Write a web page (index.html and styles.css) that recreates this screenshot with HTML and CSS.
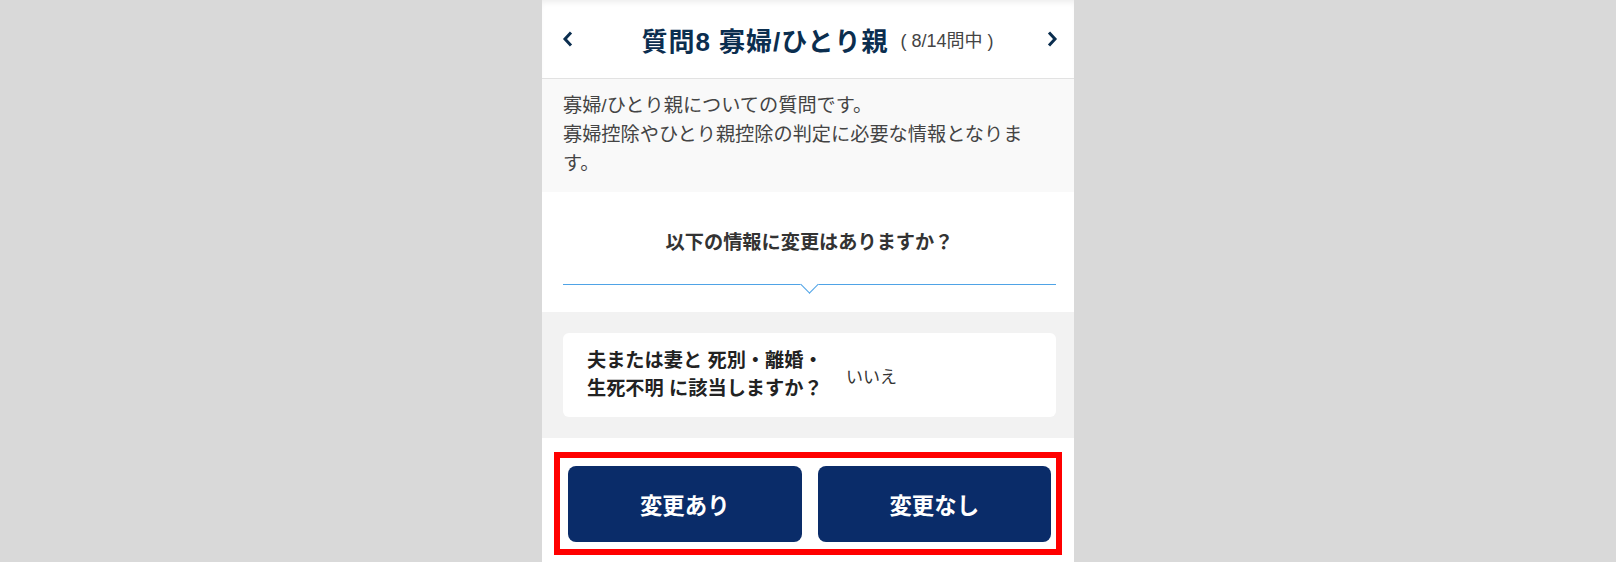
FILE: index.html
```html
<!DOCTYPE html>
<html lang="ja">
<head>
    <meta charset="UTF-8">
    <meta name="viewport" content="width=device-width, initial-scale=1.0">
    <title>質問8 寡婦/ひとり親</title>
    <link rel="stylesheet" href="styles.css">
</head>
<body>
    <div class="screen">
        <header class="nav">
            <button class="nav-arrow" aria-label="前の質問">
                <svg width="12" height="18" viewBox="0 0 12 18"><polyline points="9,2.5 3,9 9,15.5" fill="none" stroke="#0b2e4f" stroke-width="3"/></svg>
            </button>
            <h1 class="nav-title">質問8 寡婦/ひとり親<span class="nav-count">( 8/14問中 )</span></h1>
            <button class="nav-arrow" aria-label="次の質問">
                <svg width="12" height="18" viewBox="0 0 12 18"><polyline points="3,2.5 9,9 3,15.5" fill="none" stroke="#0b2e4f" stroke-width="3"/></svg>
            </button>
        </header>

        <p class="intro">寡婦/ひとり親についての質問です。<br>寡婦控除やひとり親控除の判定に必要な情報となります。</p>

        <section class="prompt">
            <p class="prompt-text">以下の情報に変更はありますか？</p>
            <div class="prompt-divider"></div>
        </section>

        <section class="answers">
            <div class="answer-card">
                <div class="answer-label">夫または妻と 死別・離婚・生死不明 に該当しますか？</div>
                <div class="answer-value">いいえ</div>
            </div>
        </section>

        <section class="actions">
            <div class="actions-box">
                <button class="action-btn">変更あり</button>
                <button class="action-btn">変更なし</button>
            </div>
        </section>
    </div>
</body>
</html>
```

FILE: styles.css
```css
body {
    margin: 0;
    font-family: "Liberation Sans", "Noto Sans CJK JP", sans-serif;
    background-color: #d9d9d9;
    color: #333;
}

.screen {
    width: 532px;
    min-height: 100vh;
    margin: 0 auto;
    background-color: #fff;
}

/* header */
.nav {
    height: 78px;
    display: flex;
    align-items: center;
    justify-content: space-between;
    padding: 0 15px 0 19px;
    border-bottom: 1px solid #e2e2e2;
    box-shadow: inset 0 5px 6px -3px rgba(0, 0, 0, 0.08);
}

.nav-arrow {
    width: 14px;
    height: 20px;
    padding: 0;
    border: none;
    background: none;
    display: flex;
    align-items: center;
    justify-content: center;
    cursor: pointer;
}

.nav-title {
    margin: 0 0 0 15px;
    font-size: 26px;
    font-weight: bold;
    letter-spacing: 1px;
    color: #0b2e4f;
    display: flex;
    align-items: center;
}

.nav-count {
    margin-left: 12px;
    font-size: 18px;
    font-weight: normal;
    letter-spacing: 0;
    color: #444;
}

/* intro */
.intro {
    margin: 0;
    padding: 12px 18px 14px 21px;
    background-color: #f9f9f9;
    font-size: 19.2px;
    line-height: 29px;
    color: #444;
}

/* question */
.prompt {
    padding: 36px 18px 27px 21px;
}

.prompt-text {
    margin: 0;
    text-align: center;
    font-size: 19.2px;
    line-height: 29px;
    font-weight: bold;
    color: #333;
}

.prompt-divider {
    position: relative;
    margin-top: 27px;
    height: 0;
    border-top: 1px solid #4fa3e6;
}

.prompt-divider::after {
    content: "";
    position: absolute;
    left: 50%;
    top: -7px;
    width: 12px;
    height: 12px;
    margin-left: -7px;
    background-color: #fff;
    border-right: 1px solid #4fa3e6;
    border-bottom: 1px solid #4fa3e6;
    transform: rotate(45deg);
}

/* current answers */
.answers {
    background-color: #f2f2f2;
    padding: 21px 18px 21px 21px;
}

.answer-card {
    display: flex;
    align-items: center;
    height: 84px;
    box-sizing: border-box;
    padding: 0 24px;
    background-color: #fff;
    border-radius: 6px;
}

.answer-label {
    width: 245px;
    font-size: 19.2px;
    line-height: 28px;
    font-weight: bold;
    color: #222;
}

.answer-value {
    margin-left: 14px;
    font-size: 17px;
    color: #333;
}

/* buttons */
.actions {
    padding: 14px 12px 0 12px;
}

.actions-box {
    display: flex;
    gap: 16px;
    padding: 8px 5px 7px 8px;
    border: 6px solid #ff0000;
}

.action-btn {
    flex: 1;
    height: 76px;
    border: none;
    border-radius: 8px;
    background-color: #0a2c69;
    color: #fff;
    font-family: inherit;
    font-size: 22.4px;
    font-weight: bold;
    cursor: pointer;
}
```
